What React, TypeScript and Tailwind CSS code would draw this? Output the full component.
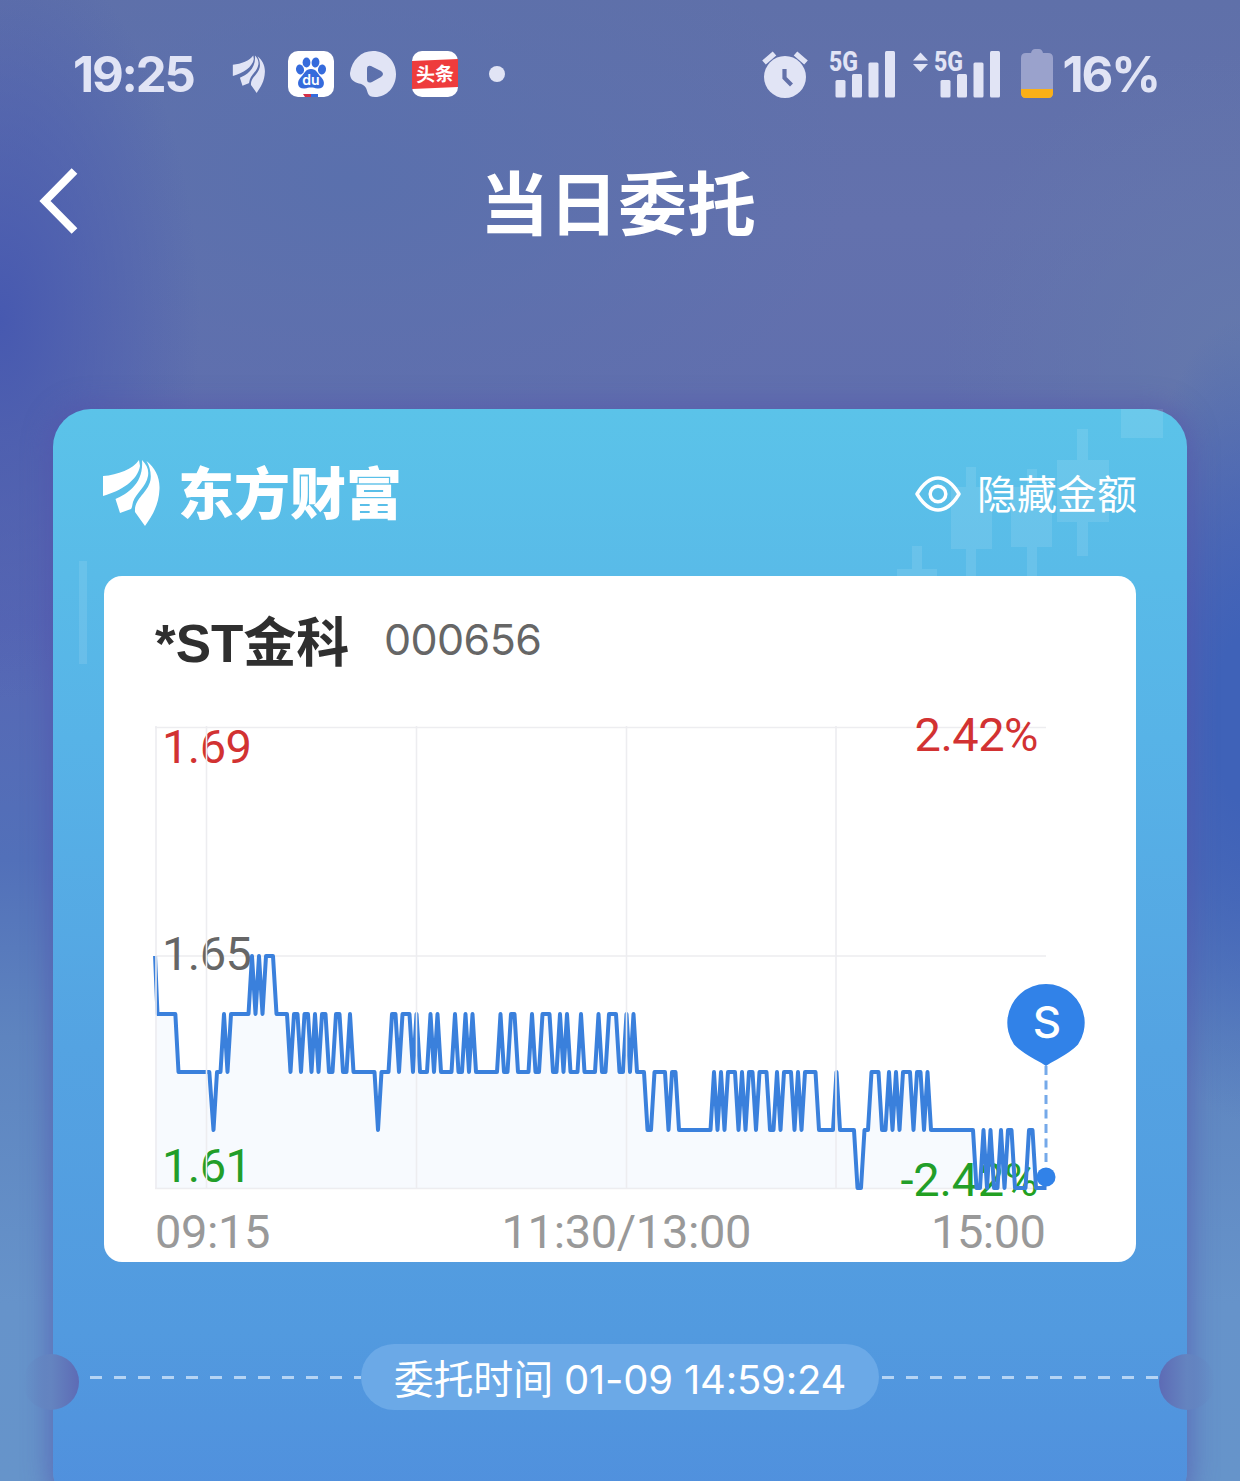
import type { ReactNode } from 'react'

// [minute after 09:30, ticks below 1.65]
const points: [number, number][] = [
  [-14.7, 0], [-14, 1], [-8.9, 1], [-8, 2], [0.8, 2], [2, 3], [3, 2], [4, 2], [5, 1], [6, 2], [7, 1],
  [12, 1], [13, 0], [14, 1], [15, 0], [16, 1], [17, 0], [19, 0], [20, 1], [23, 1], [24, 2], [25, 1],
  [26, 1], [27, 2], [28, 1], [29, 1], [30, 2], [31, 1], [32, 2], [33, 1], [34, 1], [35, 2], [36, 2],
  [37, 1], [38, 1], [39, 2], [40, 2], [41, 1], [42, 2], [48, 2], [49, 3], [50, 2], [52, 2], [53, 1],
  [54, 1], [55, 2], [56, 1], [58, 1], [59, 2], [60, 1], [61, 2], [63, 2], [64, 1], [65, 2], [66, 1],
  [67, 2], [70, 2], [71, 1], [72, 2], [73, 2], [74, 1], [75, 2], [76, 1], [77, 2], [83, 2], [84, 1],
  [85, 2], [86, 2], [87, 1], [88, 1], [89, 2], [92, 2], [93, 1], [94, 2], [95, 2], [96, 1], [98, 1],
  [99, 2], [100, 2], [101, 1], [102, 2], [103, 1], [104, 2], [106, 2], [107, 1], [108, 2], [111, 2],
  [112, 1], [113, 2], [114, 2], [115, 1], [117, 1], [118, 2], [119, 2], [120, 1], [121, 2], [122, 1],
  [123, 2], [125, 2], [126, 3], [127, 3], [128, 2], [131, 2], [132, 3], [133, 2], [134, 2], [135, 3],
  [144, 3], [145, 2], [146, 3], [147, 2], [148, 3], [149, 2], [151, 2], [152, 3], [153, 2], [154, 3],
  [155, 2], [156, 2], [157, 3], [158, 2], [160, 2], [161, 3], [162, 3], [163, 2], [164, 3], [165, 2],
  [167, 2], [168, 3], [169, 2], [170, 3], [171, 2], [174, 2], [175, 3], [179, 3], [180, 2], [181, 3],
  [185, 3], [186, 4], [187, 4], [188, 3], [189, 3], [190, 2], [192, 2], [193, 3], [194, 3], [195, 2],
  [196, 3], [197, 2], [198, 3], [199, 2], [201, 2], [202, 3], [203, 2], [204, 2], [205, 3], [206, 2],
  [207, 3], [219, 3], [220, 4], [221, 4], [222, 3], [223, 4], [224, 3], [225, 4], [226, 4], [227, 3],
  [228, 4], [229, 3], [230, 3], [231, 4], [234, 4], [235, 3], [236, 3], [237, 4], [240, 4],
]

const line = points.map(([m, t]) => `${102.5 + m * 3.5},${256 + t * 58}`).join(' ')

function BrandMark({ className }: { className: string }) {
  return (
    <svg className={className} viewBox="0 0 57 67" fill="currentColor">
      <path d="M0 17C15 16 30 10 36 1L37 7C35 21 18 32 0 37Z" />
      <path d="M39 1C44 6 46 11 45 17C43 28 33 34 30 43C29 47 29 49 28 50L17 54L12.500 40C24 35 41 25 39 1Z" />
      <path d="M43.500 2C52 9 57 18 56.500 30C56 46 49 57 42 67L32 53C31 39 44.500 35 47.500 21C48.500 14 46.500 7 43.500 2Z" />
    </svg>
  )
}

function Signal() {
  return (
    <svg className="h-[50px] w-[67px] overflow-visible" viewBox="0 0 67 50" fill="currentColor">
      <text x="0" y="21.500" fontFamily="Roboto, sans-serif" fontSize="28" fontWeight="800" textLength="29" lengthAdjust="spacingAndGlyphs">5G</text>
      <rect x="6.500" y="31" width="10" height="17.500" rx="1.500" />
      <rect x="23" y="25" width="10" height="23.500" rx="1.500" />
      <rect x="39.500" y="13.500" width="10" height="35" rx="1.500" />
      <rect x="56" y="2" width="10" height="46.500" rx="1.500" />
    </svg>
  )
}

function StatusBar() {
  return (
    <div className="flex h-[148px] items-center justify-between pr-[81px] pl-[73px] text-[#e1e4f5]">
      <div className="flex items-center">
        <span className="w-[159px] text-[49px] leading-none font-bold tracking-[-2.200px]">19:25</span>
        <BrandMark className="h-[38px] w-[34px]" />
        <svg className="ml-[22px] size-[46px]" viewBox="0 0 46 46">
          <rect width="46" height="46" rx="10" fill="#fff" />
          <g fill="#356bdc">
            <ellipse cx="12" cy="18.500" rx="4" ry="5" transform="rotate(-12 12 18.500)" />
            <ellipse cx="18.500" cy="11.500" rx="3.900" ry="5" />
            <ellipse cx="27.500" cy="11.500" rx="3.900" ry="5" transform="rotate(10 27.500 11.500)" />
            <ellipse cx="34" cy="18.500" rx="4" ry="5" transform="rotate(10 34 18.500)" />
            <path d="M23 18c5.500 0 6.500 4.500 10 8 5 5 3.500 12-3.500 11.500-3-.5-4-1-6.500-1s-3.500.5-6.500 1C9.500 38 8 31 13 26c3.500-3.500 4.500-8 10-8z" />
          </g>
          <text x="23" y="34" textAnchor="middle" fontFamily="Inter, sans-serif" fontSize="14" fontWeight="600" fill="#fff">du</text>
          <path d="M15 43h8v3h-6z" fill="#d52f48" />
          <path d="M23 43h7v3h-7z" fill="#356bdc" />
        </svg>
        <svg className="ml-4 size-[46px]" viewBox="0 0 46 46" fill="currentColor">
          <path fillRule="evenodd" d="M23 0C36 0 46 10 46 23S37 46 25 46C17 46 18 41 16 37C14 33 10 33 6 31.500C1 29 0 26 0 22C2 9 11 0 23 0ZM17 18Q17 14 21 15L31 20Q35 23 31 26L22 31Q17 33 17 28Z" />
        </svg>
        <svg className="ml-4 size-[46px]" viewBox="0 0 46 46">
          <rect width="46" height="46" rx="10" fill="#fff" />
          <path d="M0 10L46 8V36L0 38Z" fill="#ee3c3c" />
          <text x="23" y="30" textAnchor="middle" fontFamily="'Noto Sans CJK SC', sans-serif" fontSize="19" fontWeight="700" fill="#fff" transform="rotate(-2 23 23)">头条</text>
        </svg>
        <span className="ml-[31px] size-4 rounded-full bg-current" />
      </div>
      <div className="flex items-center">
        <svg className="h-[50px] w-[46px]" viewBox="0 0 46 50" fill="currentColor">
          <circle cx="23" cy="28" r="21" />
          <path d="M2 13.500L12.500 4.500M33.500 4.500L44 13.500" stroke="currentColor" strokeWidth="5.500" />
          <path d="M22.500 20v9l7 7" fill="none" stroke="#6371a9" strokeWidth="4.200" />
        </svg>
        <div className="ml-[21px]"><Signal /></div>
        <svg className="mb-6 ml-[17px] h-5 w-[15px]" viewBox="0 0 15 20" fill="currentColor">
          <path d="M7.500 0.500L15 8.500H0zM7.500 20L0 12H15z" />
        </svg>
        <div className="ml-[6px]"><Signal /></div>
        <svg className="ml-5 h-[50px] w-8" viewBox="0 0 32 50">
          <path d="M5 4h5q1-4 4-4h4q3 0 4 4h5q5 0 5 5v35q0 5-5 5H5q-5 0-5-5V9q0-5 5-5z" fill="#9aa2cc" />
          <path d="M0 40h32v4q0 5-5 5H5q-5 0-5-5z" fill="#fbb017" />
        </svg>
        <span className="ml-[10px] text-[49px] leading-none font-bold tracking-[-2.100px]">16%</span>
      </div>
    </div>
  )
}

function Candles() {
  return (
    <svg className="absolute top-0 left-0 h-[260px] w-full" viewBox="0 0 1134 260" fill="#fff" fillOpacity="0.1">
      <path d="M1068 0h42v29h-42z" />
      <path d="M1024 20h11v31h21v62h-21v34h-11v-34h-20V51h20z" />
      <path d="M913 58h10v20h16v62h-16v40h-10v-40h-15V78h15z" />
      <path d="M974 60h10v18h15v60h-15v42h-10v-42h-16V78h16z" />
      <path d="M859 137h10v23h15v20h-40v-20h15z" />
      <path d="M26 152h8v103h-8z" />
    </svg>
  )
}

function Chart() {
  return (
    <svg className="h-[562px] w-full" viewBox="0 0 1032 562" fontFamily="Roboto, sans-serif" fontSize="47">
      <g transform="translate(0 -1)">
        <path d="M51 28.500H942M51 257H942M51 489.500H942" stroke="#ededf0" strokeWidth="1.500" />
        <text x="58" y="64" fill="#d23232" textLength="90">1.69</text>
        <text x="58" y="271" fill="#666" textLength="90">1.65</text>
        <text x="58" y="483" fill="#22a022" textLength="90">1.61</text>
        <text x="934.500" y="52" textAnchor="end" fill="#d23232" textLength="124">2.42%</text>
        <text x="934.500" y="497" textAnchor="end" fill="#22a022" textLength="138">-2.42%</text>
        <g transform="translate(0 1)">
          <polygon points={`51,488 ${line} 942,488`} fill="#2f80e8" fillOpacity="0.04" />
          <polyline points={line} fill="none" stroke="#3a80dc" strokeWidth="4" strokeLinejoin="round" />
        </g>
        <path d="M52 27V489M102.500 27V489M312.500 27V489M522.500 27V489M732 27V489" stroke="#ededf0" strokeWidth="1.600" />
        <path d="M942 367V468" stroke="#75a9e9" strokeWidth="3" strokeDasharray="9 5.500" />
        <circle cx="942" cy="478" r="9.500" fill="#3182e8" />
        <path d="M942 367Q938 364 931 360.500Q916 352 910 345.500A38.700 38.700 0 1 1 974 345.500Q968 352 953 360.500Q946 364 942 367Z" fill="#3182e8" />
        <text x="943" y="339" textAnchor="middle" fontFamily="Inter, sans-serif" fontSize="44" fontWeight="500" fill="#fff">S</text>
        <g fill="#999">
          <text x="51" y="549" textLength="115.500">09:15</text>
          <text x="522.500" y="549" textAnchor="middle" textLength="250">11:30/13:00</text>
          <text x="942" y="549" textAnchor="end" textLength="115">15:00</text>
        </g>
      </g>
    </svg>
  )
}

function Dashes({ className }: { className: string }) {
  return (
    <svg className={className} fill="none">
      <path d="M0 1.500H300" stroke="#b5d4f4" strokeWidth="3" strokeDasharray="12 12" />
    </svg>
  )
}

function Card({ children }: { children: ReactNode }) {
  return (
    <div className="relative mx-[53px] mt-[148px] h-[1100px] rounded-[38px] bg-[linear-gradient(180deg,#5bc3e9_0%,#57b3e7_30%,#54a3e2_58%,#529adf_84%,#508fdd_100%)] shadow-[0_0_24px_5px_rgba(84,82,172,0.55)]">
      <Candles />
      <div className="relative">{children}</div>
      {/* ticket notches */}
      <span className="absolute top-[945px] -left-[30px] size-14 rounded-full bg-linear-to-r from-transparent via-[#6484c0] to-[#5d6bb5]" />
      <span className="absolute top-[945px] -right-[28px] size-14 rounded-full bg-linear-to-l from-transparent via-[#6484c0] to-[#5d6bb5]" />
    </div>
  )
}

export default function App() {
  return (
    <div className="relative h-[1481px] w-[1240px] overflow-hidden bg-[#6072ad] font-['Inter','Noto_Sans_CJK_SC',sans-serif]">
      {/* soft backdrop */}
      <div className="absolute inset-0 bg-[radial-gradient(ellipse_200px_380px_at_0px_320px,#4759b0,transparent),radial-gradient(ellipse_120px_400px_at_1240px_720px,#3f62b8_20%,transparent),radial-gradient(ellipse_500px_300px_at_350px_180px,#5a70ad,transparent),radial-gradient(ellipse_300px_300px_at_1240px_350px,#6478ac,transparent),linear-gradient(180deg,#5f70a9_0%,#6371ad_15%,#606fae_28%,#5767b4_42%,#5270b9_58%,#5e84bf_70%,#6693ca_88%,#6694ca_100%)]" />
      <div className="relative">
        <StatusBar />
        <header className="grid h-[113px] grid-cols-[100px_1fr_100px] items-center">
          <svg className="mb-[7px] ml-[38px] h-[66px] w-10" viewBox="0 0 40 66" fill="none" stroke="#fff" strokeWidth="8">
            <path d="M36.500 3L7 33L36.500 63" />
          </svg>
          <h1 className="mt-0.5 mr-1 text-center text-[69px] leading-none font-bold text-white">当日委托</h1>
        </header>
        <Card>
          <div className="flex h-[167px] items-center justify-between px-[50px] text-white">
            <div className="flex items-center">
              <BrandMark className="h-[67px] w-[57px]" />
              <span className="mt-0.5 ml-[18px] text-[56px] leading-none font-black">东方财富</span>
            </div>
            <div className="mt-[3px] flex items-center gap-4">
              <svg className="h-9 w-[46px]" viewBox="0 0 46 36" fill="none" stroke="currentColor" strokeWidth="3.500">
                <path d="M2 18C8 8 15 2 23 2S38 8 44 18C38 28 31 34 23 34S8 28 2 18Z" strokeLinejoin="round" />
                <circle cx="23" cy="18" r="7.800" />
              </svg>
              <span className="mt-0.5 text-[40px] leading-none">隐藏金额</span>
            </div>
          </div>
          <section className="mx-[51px] h-[686px] overflow-hidden rounded-[18px] bg-white">
            <div className="flex h-[124px] items-center pl-[51px]">
              <h2 className="mt-[11px] w-[194px] font-['Liberation_Sans','Noto_Sans_CJK_SC',sans-serif] text-[53px] leading-none font-bold whitespace-nowrap text-[#2f2f2f]">*ST金科</h2>
              <span className="mt-[2px] ml-[35px] text-[43px] leading-none tracking-[-0.600px] text-[#666]">000656</span>
            </div>
            <Chart />
          </section>
          <div className="mt-[82px] flex items-center pr-[29px] pl-[37px]">
            <Dashes className="h-[3px] w-[271px]" />
            <div className="flex h-[66px] w-[518px] items-center justify-center rounded-full bg-[#6ba9e7] pt-1.5 text-[40px] tracking-[-0.200px] whitespace-nowrap text-white">
              委托时间 01-09 14:59:24
            </div>
            <Dashes className="ml-[3px] h-[3px] min-w-0 flex-1" />
          </div>
        </Card>
      </div>
    </div>
  )
}
